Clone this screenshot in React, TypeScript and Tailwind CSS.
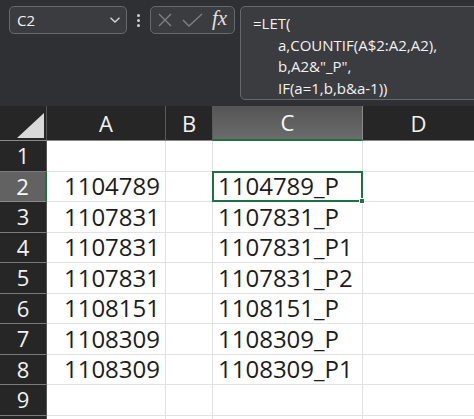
import React from "react";

const rows: [string, string, string][] = [
  ["1", "", ""],
  ["2", "1104789", "1104789_P"],
  ["3", "1107831", "1107831_P"],
  ["4", "1107831", "1107831_P1"],
  ["5", "1107831", "1107831_P2"],
  ["6", "1108151", "1108151_P"],
  ["7", "1108309", "1108309_P"],
  ["8", "1108309", "1108309_P1"],
  ["9", "", ""],
  ["", "", ""],
];

const cellFont = { fontFamily: '"Open Sans", sans-serif' };

export default function App() {
  return (
    <div className="w-[474px] h-[419px] overflow-hidden bg-[#2e3033] flex flex-col" style={cellFont}>
      {/* Formula bar area */}
      <div className="h-[106px] shrink-0 flex items-start pt-[6px] pl-[9px] overflow-hidden">
        <div className="shrink-0 w-[118px] h-[28px] rounded-[5px] border border-[#66686b] bg-[#3a3c3f] flex items-center justify-between pl-[7px] pr-[5px]">
          <span className="text-[15px] text-[#f2f2f2]">C2</span>
          <svg width="12" height="8" viewBox="0 0 12 8">
            <path d="M1.5 1.8 L6 6 L10.5 1.8" stroke="#d8d8d8" strokeWidth="1.3" fill="none" />
          </svg>
        </div>
        <div className="shrink-0 w-[23px] h-[28px] flex flex-col items-center justify-center gap-[2px]">
          <div className="w-[3px] h-[3px] bg-[#d0d0d0] rounded-full" />
          <div className="w-[3px] h-[3px] bg-[#d0d0d0] rounded-full" />
          <div className="w-[3px] h-[3px] bg-[#d0d0d0] rounded-full" />
        </div>
        <div className="shrink-0 w-[85px] h-[28px] rounded-[5px] border border-[#66686b] bg-[#3a3c3f] flex items-center pl-[6px] gap-[9px]">
          <svg width="16" height="16" viewBox="0 0 16 16" className="shrink-0">
            <path d="M2 2 L14 14 M14 2 L2 14" stroke="#7e8082" strokeWidth="1.4" fill="none" />
          </svg>
          <svg width="21" height="16" viewBox="0 0 21 16" className="shrink-0">
            <path d="M1 8 L7 14 L20 2" stroke="#7e8082" strokeWidth="1.4" fill="none" />
          </svg>
          <span
            className="text-[21px] italic text-[#e0e0e0] leading-none -mt-[3px]"
            style={{ fontFamily: '"Liberation Serif", serif' }}
          >
            fx
          </span>
        </div>
        <div className="shrink-0 ml-[5px] w-[260px] h-[94px] rounded-[5px] border border-[#66686b] bg-[#3a3c3f] pl-[12px] pt-[6px] text-[15px] leading-[21.7px] text-[#f2f2f2]">
          <div>=LET(</div>
          <div className="pl-[25px]">a,COUNTIF(A$2:A2,A2),</div>
          <div className="pl-[25px]">b,A2&amp;"_P",</div>
          <div className="pl-[25px]">IF(a=1,b,b&amp;a-1))</div>
        </div>
      </div>

      {/* Grid */}
      <div className="grid grid-cols-[47px_119px_47px_150px_111px] grid-rows-[35px_repeat(10,30.5px)] bg-white">
        {/* Header row */}
        <div className="bg-[#262626] border-r border-[#555] border-b border-b-[#8a8a8a] relative">
          <svg className="absolute left-[17px] top-[7px]" width="28" height="26" viewBox="0 0 28 26">
            <polygon points="27,0 27,25 0,25" fill="#d9d9d9" />
          </svg>
        </div>
        <div className="bg-[#262626] border-r border-[#5a5a5a] border-b border-b-[#8a8a8a] flex items-center justify-center text-[22px] text-[#f2f2f2]">A</div>
        <div className="bg-[#262626] border-r border-[#5a5a5a] border-b border-b-[#8a8a8a] flex items-center justify-center text-[22px] text-[#f2f2f2]">B</div>
        <div className="bg-gradient-to-b from-[#555555] to-[#6b6b6b] border-r border-[#8a8a8a] border-b-2 border-b-[#1e7145] flex items-center justify-center text-[22px] text-[#f8f8f8]">C</div>
        <div className="bg-[#262626] border-b border-b-[#8a8a8a] flex items-center justify-center text-[22px] text-[#f2f2f2]">D</div>

        {rows.map(([n, a, c], i) => {
          const sel = n === "2";
          return (
            <React.Fragment key={i}>
              <div
                className={
                  sel
                    ? "bg-[#626262] border-r-2 border-r-[#1e7145] border-b border-b-[#8a8a8a] flex items-center justify-center text-[22px] text-[#f8f8f8]"
                    : "bg-[#262626] border-r border-r-[#555] border-b border-b-[#7a7a7a] flex items-center justify-center text-[22px] text-[#f2f2f2]"
                }
              >
                {n}
              </div>
              <div className="border-r border-b border-[#e1e1e1] flex items-center justify-end pr-[5px] text-[24px] text-[#1c1c1c]">
                {a}
              </div>
              <div className="border-r border-b border-[#e1e1e1]" />
              {sel ? (
                <div className="relative border-2 border-[#1e7145] -ml-[1px] -mt-[1px] flex items-center pl-[4px] text-[24px] text-[#1c1c1c]">
                  {c}
                  <div className="absolute -right-[4px] -bottom-[4px] w-[6px] h-[6px] bg-[#1e7145] border border-white" />
                </div>
              ) : (
                <div className="border-r border-b border-[#e1e1e1] flex items-center pl-[5px] text-[24px] text-[#1c1c1c]">
                  {c}
                </div>
              )}
              <div className="border-b border-[#e1e1e1]" />
            </React.Fragment>
          );
        })}
      </div>
    </div>
  );
}
